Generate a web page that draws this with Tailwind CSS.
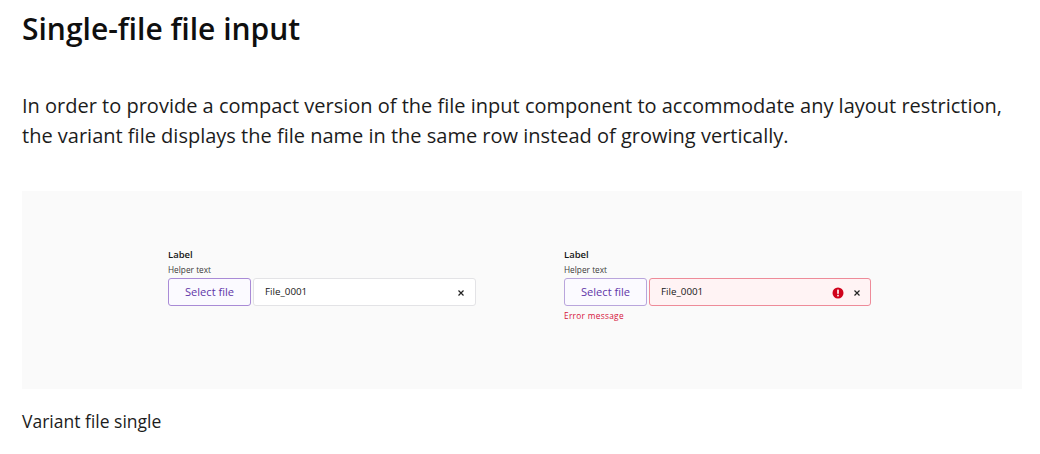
<!DOCTYPE html>
<html lang="en">
  <head>
    <meta charset="UTF-8" />
    <script src="https://cdn.jsdelivr.net/npm/@tailwindcss/browser@4"></script>
    <title>Single-file file input</title>
  </head>
  <body class="bg-white w-[1040px] h-[454px] overflow-hidden font-['Open_Sans',sans-serif] text-[#161616]">
    <div class="pl-[22px] pr-[18px]">
      <h2 class="text-[30px] leading-[38px] font-semibold text-[#0f0f0f] pt-[10px]">Single-file file input</h2>

      <p class="text-[20px] leading-[30px] text-[#1c1c1c] mt-[43px]">
        In order to provide a compact version of the file input component to accommodate any layout restriction,<br />
        the variant file displays the file name in the same row instead of growing vertically.
      </p>

      <!-- Demo panel -->
      <div class="bg-[#fafafa] h-[198px] mt-[40px] pl-[146px] pt-[57px] flex gap-[88px]">
        <!-- Default -->
        <div class="w-[308px]">
          <p class="text-[9.5px] leading-[12px] font-semibold mt-[1px]">Label</p>
          <p class="text-[8.3px] leading-[12px] text-[#3a3a3a] mt-[3px]">Helper text</p>
          <div class="flex gap-[2px] mt-[2px]">
            <button class="w-[83px] h-[28px] pt-[1px] rounded-[3px] border border-[#a98bd6] bg-[#fbfaff] text-[#5f35a8] text-[11.1px]">Select file</button>
            <div class="flex-1 h-[28px] pt-[1px] rounded-[3px] border border-[#e3e3e6] bg-white flex items-center pl-[11px] pr-[9px]">
              <span class="text-[9.8px] flex-1">File_0001</span>
              <svg class="w-[10px] h-[10px]" viewBox="0 0 10 10" fill="none" stroke="#222" stroke-width="1.2"><path d="M2.5 2.5l5 5M7.5 2.5l-5 5" /></svg>
            </div>
          </div>
        </div>

        <!-- Error -->
        <div class="w-[307px]">
          <p class="text-[9.5px] leading-[12px] font-semibold mt-[1px]">Label</p>
          <p class="text-[8.3px] leading-[12px] text-[#3a3a3a] mt-[3px]">Helper text</p>
          <div class="flex gap-[2px] mt-[2px]">
            <button class="w-[83px] h-[28px] pt-[1px] rounded-[3px] border border-[#b9a5dc] bg-[#fbfaff] text-[#5f35a8] text-[11.1px]">Select file</button>
            <div class="flex-1 h-[28px] pt-[1px] rounded-[3px] border border-[#ee8b99] bg-[#fff3f4] flex items-center pl-[11px] pr-[8px]">
              <span class="text-[9.8px] flex-1">File_0001</span>
              <svg class="w-[12px] h-[12px] mr-[8px]" viewBox="0 0 12 12"><circle cx="6" cy="6" r="5.5" fill="#d0021b" /><rect x="5.2" y="2.6" width="1.6" height="4.2" fill="#fff" /><rect x="5.2" y="7.8" width="1.6" height="1.6" fill="#fff" /></svg>
              <svg class="w-[10px] h-[10px]" viewBox="0 0 10 10" fill="none" stroke="#222" stroke-width="1.2"><path d="M2.5 2.5l5 5M7.5 2.5l-5 5" /></svg>
            </div>
          </div>
          <p class="text-[8.3px] leading-[12px] text-[#d6133a] mt-[4px] tracking-[0.3px]">Error message</p>
        </div>
      </div>

      <p class="text-[17.5px] leading-[24px] text-[#1c1c1c] mt-[20px]">Variant file single</p>
    </div>
  </body>
</html>
